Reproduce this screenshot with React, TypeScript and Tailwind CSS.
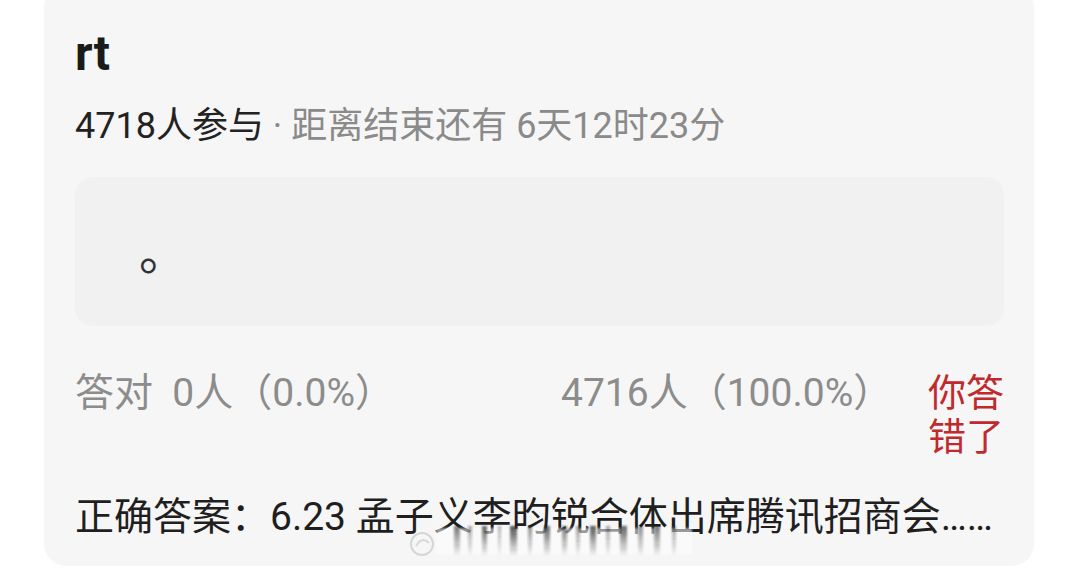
import React from 'react';

const font = { fontFamily: 'Roboto, "Noto Sans CJK SC", sans-serif' };

// blurred watermark smear under the answer line
const streaks = [
  { x: 48, w: 6, o: 0.6 },
  { x: 62, w: 4, o: 0.4 },
  { x: 76, w: 5, o: 0.7 },
  { x: 92, w: 3, o: 0.35 },
  { x: 104, w: 7, o: 0.8 },
  { x: 122, w: 4, o: 0.5 },
  { x: 138, w: 6, o: 0.7 },
  { x: 156, w: 5, o: 0.6 },
  { x: 170, w: 4, o: 0.45 },
  { x: 184, w: 6, o: 0.75 },
  { x: 200, w: 4, o: 0.4 },
  { x: 214, w: 7, o: 0.7 },
  { x: 232, w: 5, o: 0.5 },
  { x: 248, w: 6, o: 0.6 },
  { x: 266, w: 4, o: 0.4 },
];

const Watermark = () => (
  <svg
    className="absolute left-[406px] top-[524px] pointer-events-none"
    width="290"
    height="36"
    viewBox="0 0 290 36"
  >
    <defs>
      <linearGradient id="fade" x1="0" y1="0" x2="0" y2="1">
        <stop offset="0" stopColor="#1a1a1a" stopOpacity="0.95" />
        <stop offset="1" stopColor="#1a1a1a" stopOpacity="0" />
      </linearGradient>
      <filter id="soft">
        <feGaussianBlur stdDeviation="1.1" />
      </filter>
    </defs>
    <rect x="30" y="4" width="256" height="26" fill="#ffffff" opacity="0.55" filter="url(#soft)" />
    <g filter="url(#soft)">
      {streaks.map((s, i) => (
        <rect key={i} x={s.x} y="2" width={s.w} height="30" fill="url(#fade)" opacity={s.o} />
      ))}
    </g>
    <circle cx="16" cy="20" r="11" fill="none" stroke="#d6d6d6" strokeWidth="2" />
    <path d="M10 22 q6 -10 13 -3" fill="none" stroke="#d9d9d9" strokeWidth="2" />
  </svg>
);

const App = () => {
  return (
    <div className="relative w-[1080px] h-[568px] bg-white overflow-hidden" style={font}>
      <div className="ml-[44px] mt-[-14px] w-[990px] rounded-[22px] bg-[#f6f6f6] pl-[31px] pr-[30px] pt-[40px] pb-[27px]">
        {/* Title */}
        <div className="text-[48px] leading-[56px] font-bold text-[#1a1a1a]">rt</div>

        {/* Meta */}
        <div className="mt-[22px] text-[36px] leading-[44px] whitespace-nowrap">
          <span className="text-[#222222]">4718人参与</span>
          <span className="text-[#8a8a8a]"> · 距离结束还有 6天12时23分</span>
        </div>

        {/* Option box */}
        <div className="mt-[29px] h-[149px] rounded-[18px] bg-[#f1f1f1] flex items-center pl-[64px]">
          <span className="text-[48px] leading-none text-[#333333] mt-[4px]">。</span>
        </div>

        {/* Stats */}
        <div className="mt-[45px] flex text-[39px] leading-[44px]">
          <div className="w-[486px] text-[#8c8c8c] whitespace-nowrap">答对&nbsp;&nbsp;0人（0.0%）</div>
          <div className="flex-1 text-[#8c8c8c] whitespace-nowrap">4716人（100.0%）</div>
          <div className="text-[#c0292e] text-right text-[38px]">
            你答
            <br />
            错了
          </div>
        </div>

        {/* Answer */}
        <div className="mt-[36px] text-[39px] leading-[44px] text-[#1f1f1f] whitespace-nowrap">
          正确答案：6.23 孟子义李昀锐合体出席腾讯招商会……
        </div>
      </div>
      <Watermark />
    </div>
  );
};

export default App;
